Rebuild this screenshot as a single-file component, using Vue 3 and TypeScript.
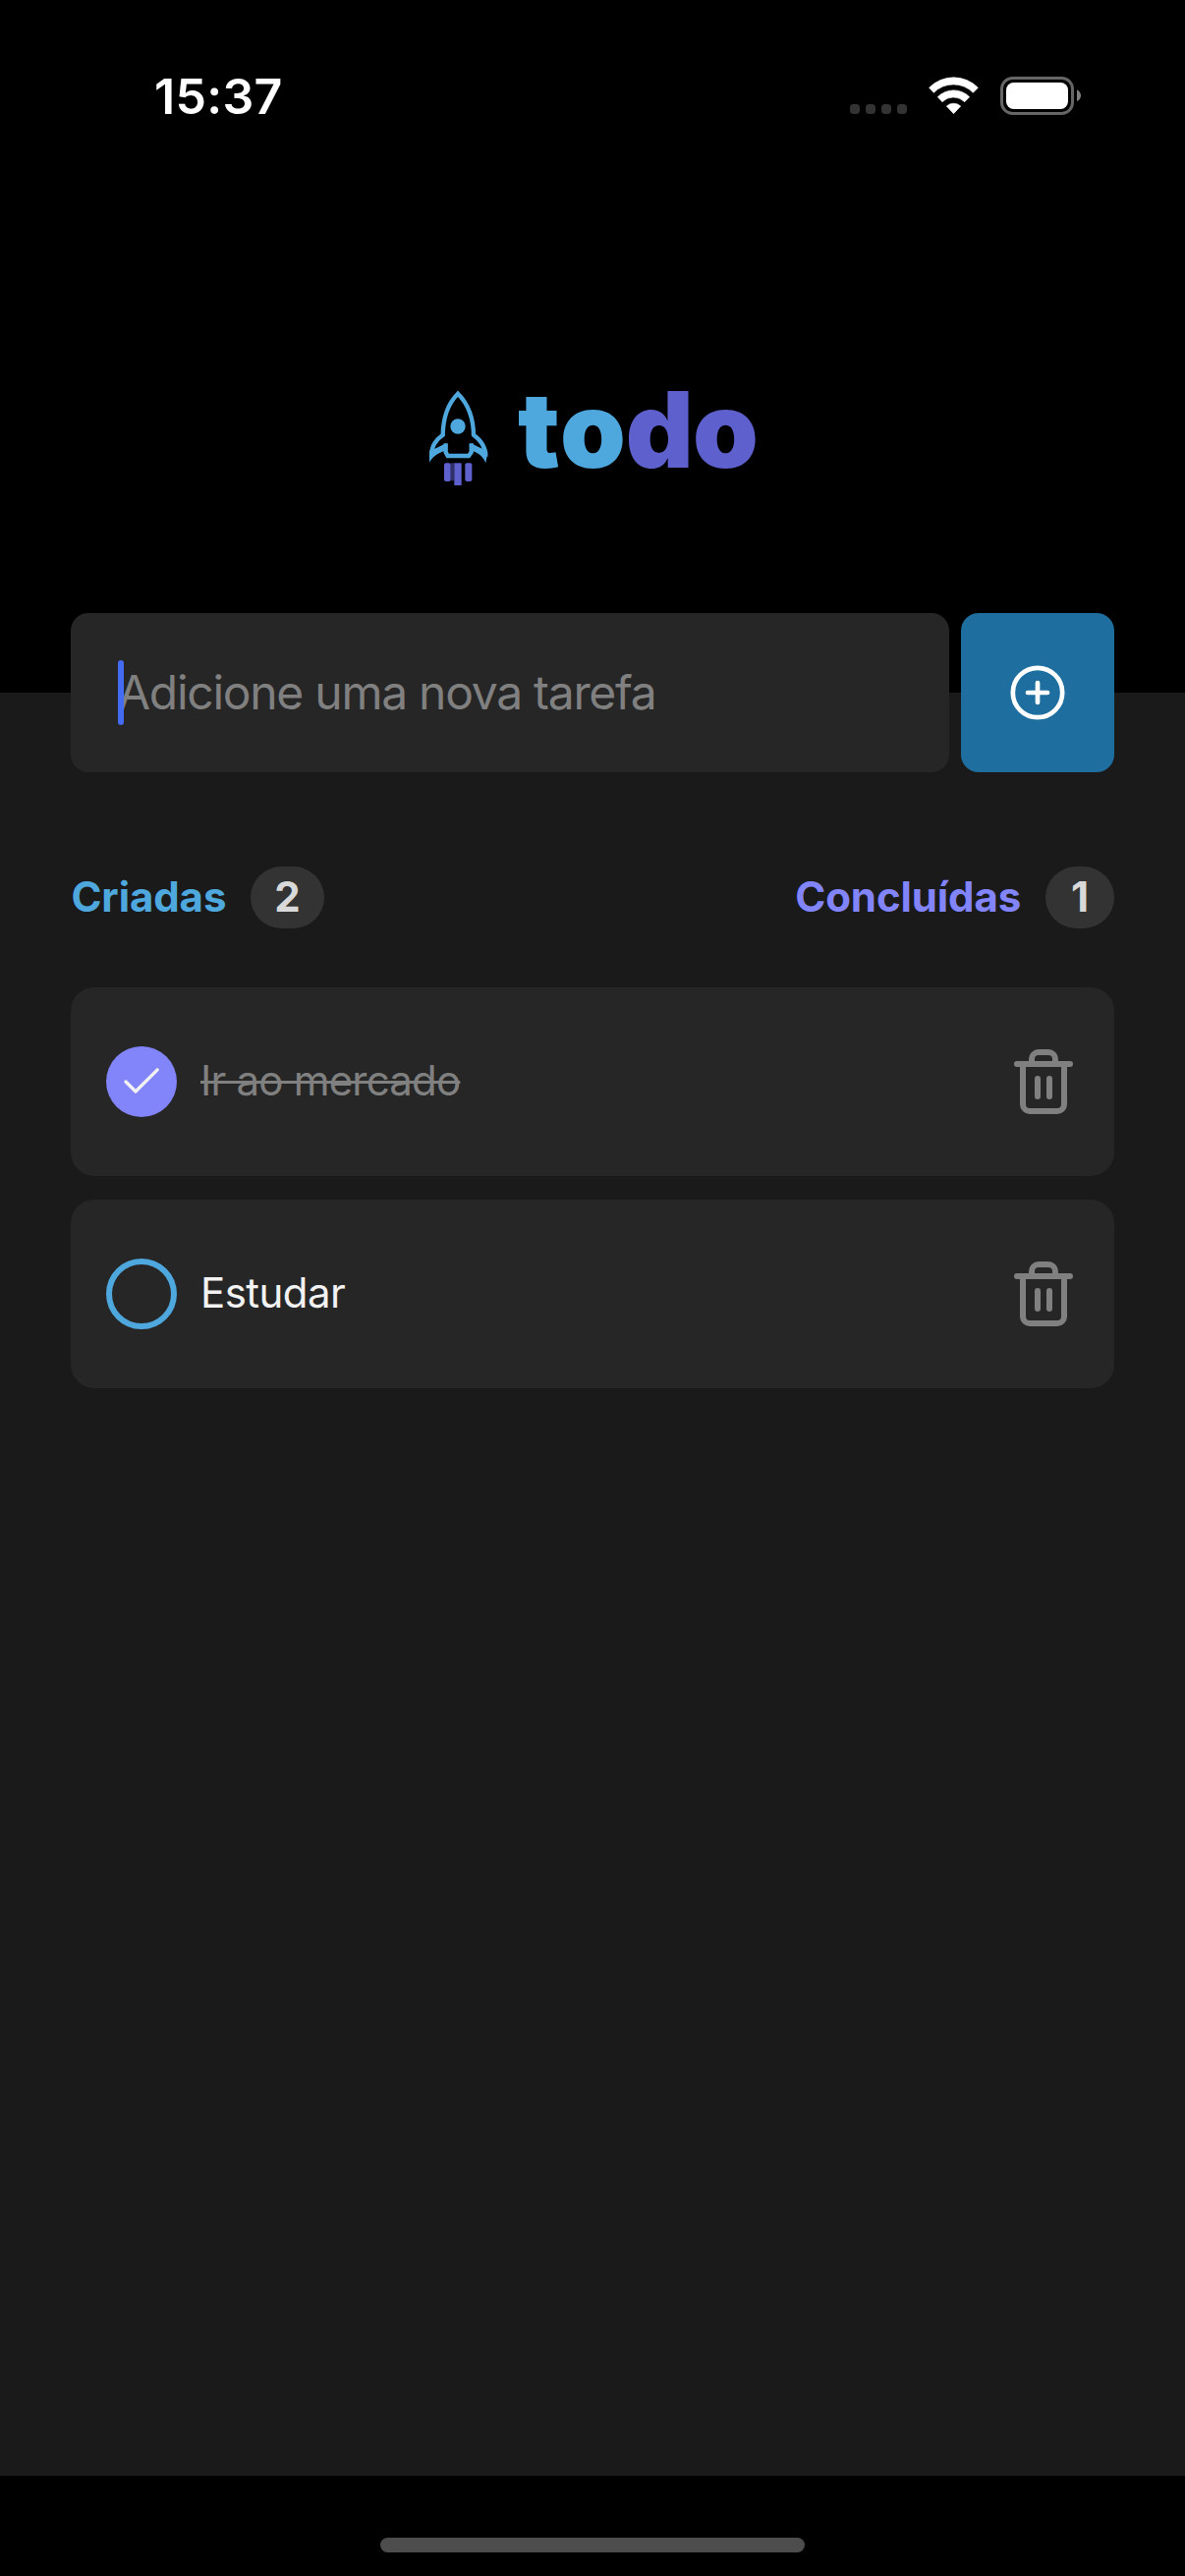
<script setup lang="ts">
import { computed, ref } from 'vue'

interface Task {
  id: number
  title: string
  done: boolean
}

const tasks = ref<Task[]>([
  { id: 1, title: 'Ir ao mercado', done: true },
  { id: 2, title: 'Estudar', done: false },
])

const created = computed(() => tasks.value.length)
const completed = computed(() => tasks.value.filter((t) => t.done).length)

function toggle(task: Task) {
  task.done = !task.done
}

function remove(id: number) {
  tasks.value = tasks.value.filter((t) => t.id !== id)
}
</script>

<template>
  <div class="screen">
    <header class="top">
      <div class="status">
        <span class="clock">15:37</span>
        <svg class="indicators" viewBox="75 84 705 117" aria-hidden="true">
          <g fill="#333">
            <rect x="75" y="168" width="30" height="30" rx="11" />
            <rect x="123" y="168" width="30" height="30" rx="11" />
            <rect x="171" y="168" width="30" height="30" rx="11" />
            <rect x="219" y="168" width="30" height="30" rx="11" />
          </g>
          <g fill="#fff" stroke="#fff" stroke-width="2" stroke-linejoin="round">
            <path d="M317 118A104 104 0 0 1 466 118L451 133A84 84 0 0 0 331 133Z" />
            <path d="M343 146A68 68 0 0 1 440 146L425 161A48 48 0 0 0 357 161Z" />
            <path d="M370 174A32 32 0 0 1 413 174L391.500 197Z" />
          </g>
          <rect x="538.500" y="88.500" width="216" height="108" rx="33" fill="none" stroke="#666" stroke-width="9" />
          <rect x="552" y="102" width="189" height="81" rx="23" fill="#fff" />
          <path d="M768 124C776 128 780 135 780 142S776 156 768 160Z" fill="#808080" />
        </svg>
      </div>
      <svg class="logo" viewBox="51 54 1002 288" role="img" aria-label="todo">
        <g fill="none" stroke="#4ea8de" stroke-width="13">
          <path d="M92 192C92 130 110 90 138 62C166 90 186 130 186 192" />
          <path d="M94 187C74 201 57 218 57 254M184 187C204 201 223 220 223 254" />
          <path d="M101 214V241L107 252H171L179 241V214" />
          <path d="M66 238L101 221M213 238L179 221" />
        </g>
        <g fill="#4ea8de">
          <path d="M51 236V272C60 256 74 244 100 236L98 222L64 232Z" />
          <path d="M229 240L223 274C216 256 204 244 180 236L182 222L216 232Z" />
        </g>
        <circle cx="138" cy="162" r="23" fill="#4ea8de" />
        <g fill="#5e60ce">
          <rect x="96" y="274" width="20" height="56" rx="6" />
          <rect x="127" y="274" width="22" height="68" />
          <rect x="160" y="274" width="21" height="56" rx="6" />
          <rect x="116" y="274" width="11" height="54" opacity=".5" />
        </g>
        <g class="wordmark">
          <text y="287" fill="#4ea8de"><tspan x="321">t</tspan><tspan x="450">o</tspan></text>
          <text y="287" fill="#5e60ce"><tspan x="650">d</tspan><tspan x="855">o</tspan></text>
        </g>
      </svg>
    </header>

    <main class="content">
      <div class="form">
        <div class="field">
          <span class="placeholder">Adicione uma nova tarefa</span>
          <i class="caret"></i>
        </div>
        <button class="add" type="button" aria-label="Adicionar">
          <svg width="56" height="56" viewBox="0 0 56 56" fill="none" stroke="#fff" stroke-width="4.700" stroke-linecap="round">
            <circle cx="28" cy="28" r="25.200" />
            <path d="M28 18V38M18 28H38" />
          </svg>
        </button>
      </div>

      <div class="summary">
        <div class="counter">
          <span class="label created">Criadas</span>
          <span class="badge">{{ created }}</span>
        </div>
        <div class="counter">
          <span class="label completed">Concluídas</span>
          <span class="badge">{{ completed }}</span>
        </div>
      </div>

      <ul class="list">
        <li v-for="task in tasks" :key="task.id" class="card" :class="{ done: task.done }">
          <button class="check" type="button" :aria-label="task.title" @click="toggle(task)">
            <svg v-if="task.done" width="72" height="72" viewBox="0 0 72 72" fill="none" stroke="#f2f2f2" stroke-width="3.300" stroke-linecap="round" stroke-linejoin="round">
              <path d="M20 36L30 46L52.200 23.800" />
            </svg>
          </button>
          <span class="title">{{ task.title }}</span>
          <button class="trash" type="button" aria-label="Remover" @click="remove(task.id)">
            <svg width="60" height="66" viewBox="0 0 60 66" fill="none" stroke="#808080" stroke-width="6" stroke-linecap="round">
              <path d="M3 15H57" />
              <path d="M18 15V10A7 7 0 0 1 25 3H35A7 7 0 0 1 42 10V15" />
              <path d="M9 15V56A7 7 0 0 0 16 63H44A7 7 0 0 0 51 56V15" />
              <path d="M24 30V48M36 30V48" />
            </svg>
          </button>
        </li>
      </ul>
    </main>

    <footer class="bottom"><i class="home"></i></footer>
  </div>
</template>

<style>
body {
  margin: 0;
  background: #000;
}
</style>

<style scoped>
.screen {
  display: flex;
  flex-direction: column;
  width: 1206px;
  height: 2622px;
  background: #000;
  font-family: Inter, 'Liberation Sans', sans-serif;
}

button {
  display: flex;
  align-items: center;
  justify-content: center;
  padding: 0;
  border: 0;
  background: none;
}

.top {
  display: flex;
  flex-direction: column;
  align-items: center;
  height: 705px;
}

.status {
  display: flex;
  align-items: center;
  justify-content: space-between;
  box-sizing: border-box;
  width: 100%;
  height: 195px;
  padding: 0 106px 0 157px;
}

.clock {
  color: #fff;
  font-size: 50px;
  font-weight: 600;
  letter-spacing: 0.3px;
}

.indicators {
  width: 235px;
  height: 39px;
}

.logo {
  width: 334px;
  height: 96px;
  margin: 203px 0 0 2px;
  overflow: visible;
  filter: blur(0.7px);
}

.wordmark {
  font-size: 321px;
  font-weight: 900;
}

.content {
  flex: 1;
  padding: 0 72px;
  background: #1a1a1a;
}

.form {
  display: flex;
  gap: 12px;
  height: 162px;
  margin-top: -81px;
}

.field {
  position: relative;
  display: flex;
  flex: 1;
  align-items: center;
  padding-left: 48px;
  border-radius: 18px;
  background: #262626;
}

.placeholder {
  padding-bottom: 2px;
  color: #808080;
  font-size: 48px;
  letter-spacing: -1.28px;
}

.caret {
  position: absolute;
  top: 48px;
  left: 48px;
  width: 6px;
  height: 66px;
  border-radius: 3px;
  background: #446cf2;
}

.add {
  width: 156px;
  border-radius: 18px;
  background: #1e6f9f;
}

.summary {
  display: flex;
  justify-content: space-between;
  height: 63px;
  margin-top: 96px;
}

.counter {
  display: flex;
  align-items: center;
  gap: 24px;
  font-size: 42px;
  font-weight: 700;
  line-height: 61px;
}

.label {
  padding: 0 0.8px 2px 0.4px;
  letter-spacing: -0.1px;
}

.created {
  color: #4ea8de;
}

.completed {
  color: #8284fa;
}

.badge {
  box-sizing: border-box;
  min-width: 70px;
  height: 63px;
  padding: 0 24.2px;
  border-radius: 32px;
  background: #333;
  color: #d9d9d9;
  text-align: center;
}

.list {
  display: flex;
  flex-direction: column;
  gap: 24px;
  margin: 60px 0 0;
  padding: 0;
  list-style: none;
}

.card {
  display: flex;
  align-items: center;
  box-sizing: border-box;
  height: 192px;
  padding: 0 42px 0 36px;
  border-radius: 24px;
  background: #262626;
}

.check {
  box-sizing: border-box;
  width: 72px;
  height: 72px;
  border: 6px solid #4ea8de;
  border-radius: 50%;
}

.title {
  flex: 1;
  padding-bottom: 3px;
  margin-left: 24px;
  color: #f2f2f2;
  font-size: 42px;
  letter-spacing: -0.55px;
}

.done .check {
  border: 0;
  background: #8284fa;
}

.done .title {
  color: #808080;
  letter-spacing: -0.8px;
  text-decoration: line-through;
  text-decoration-thickness: 3px;
}

.bottom {
  display: flex;
  justify-content: center;
  height: 102px;
}

.home {
  width: 432px;
  height: 15px;
  margin-top: 63px;
  border-radius: 8px;
  background: #4d4d4d;
}
</style>
